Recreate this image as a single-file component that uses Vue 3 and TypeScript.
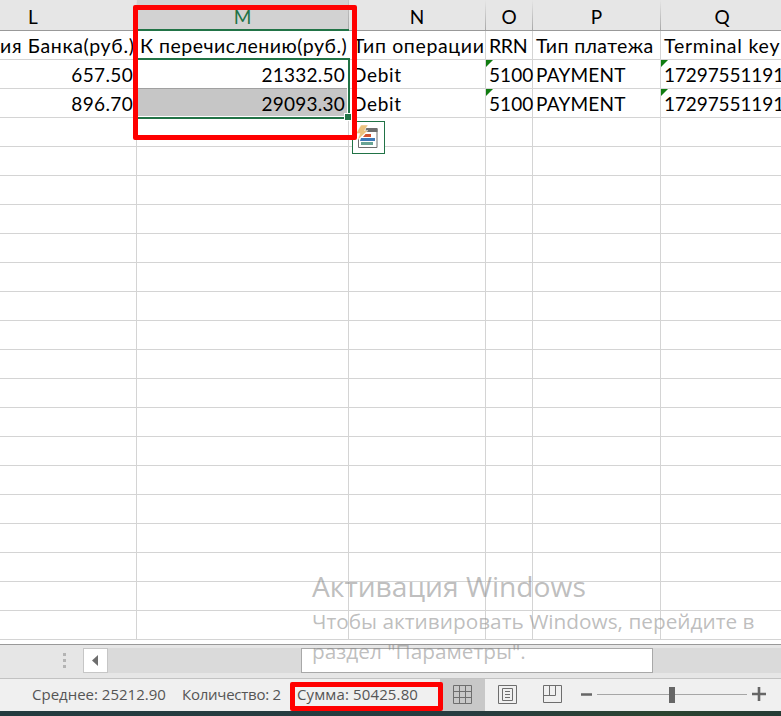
<script setup lang="ts">
interface Column {
  id: string
  width: number
  title: string
  titleSpacing: number
  values: string[]
  spacing: number
  numeric?: boolean
  flagged?: boolean
}

const columns: Column[] = [
  { id: 'L', width: 137, title: 'ия Банка(руб.)', titleSpacing: 0.66, values: ['657.50', '896.70'], spacing: 0.35, numeric: true },
  { id: 'M', width: 212, title: 'К перечислению(руб.)', titleSpacing: 0.5, values: ['21332.50', '29093.30'], spacing: 0.25, numeric: true },
  { id: 'N', width: 137, title: 'Тип операции', titleSpacing: 0.65, values: ['Debit', 'Debit'], spacing: 0.65 },
  { id: 'O', width: 47, title: 'RRN', titleSpacing: -0.4, values: ['5100', '5100'], spacing: 0.1, flagged: true },
  { id: 'P', width: 128, title: 'Тип платежа', titleSpacing: 0.4, values: ['PAYMENT', 'PAYMENT'], spacing: 0.2 },
  { id: 'Q', width: 121, title: 'Terminal key', titleSpacing: 0.78, values: ['17297551191', '17297551191'], spacing: -0.1, flagged: true },
]
const emptyRows = 18
</script>

<template>
  <div class="window">
    <div class="sheet">
      <div v-for="c in columns" :key="c.id" class="column" :class="'col-' + c.id" :style="{ width: c.width + 'px' }">
        <div class="head"><span>{{ c.id }}</span></div>
        <div class="cell title"><span :style="{ letterSpacing: c.titleSpacing + 'px' }">{{ c.title }}</span></div>
        <div v-for="(v, i) in c.values" :key="i" class="cell" :class="{ numeric: c.numeric, flagged: c.flagged, shaded: c.id === 'M' && i === 1, first: i === 0 }">
          <span :style="{ letterSpacing: c.spacing + 'px' }">{{ v }}</span>
        </div>
        <div v-for="n in emptyRows" :key="'e' + n" class="cell"></div>
      </div>
      <div class="selection"><i class="handle"></i></div>
      <svg class="quick" width="33" height="33" viewBox="0 0 33 33">
        <rect x=".5" y=".5" width="32" height="32" fill="#fff" stroke="#217346" />
        <path d="M6.500 18v8.500h18.500V8" fill="none" stroke="#6e6e6e" />
        <path d="M14 7h11.500v4H13z" fill="#6e6e6e" />
        <path d="M13.500 13h5.500v3h-8z" fill="#d35230" />
        <path d="M9 17h14v3H8z" fill="#3e78b8" />
        <path d="M9 21h12v3H9z" fill="#68a394" />
        <path d="M9 4h7l-3.500 5.500H16L5.500 19l2.500-6.500H4z" fill="#ebc27e" stroke="#fff" stroke-width=".4" />
      </svg>
    </div>

    <div class="scroll">
      <div class="grip"><i></i><i></i><i></i></div>
      <div class="arrow"><svg width="23" height="23" viewBox="0 0 23 23"><path d="M8 11.500L14 6v11z" fill="#6e6e6e" /></svg></div>
      <div class="track"><div class="thumb"></div></div>
    </div>

    <div class="status">
      <span class="stat avg">Среднее: 25212.90</span>
      <span class="stat count">Количество: 2</span>
      <span class="stat sum">Сумма: 50425.80</span>
      <div class="view active">
        <svg width="19" height="19" viewBox="0 0 19 19"><path d="M.5.5h18v18H.5zM6.500.5v18M12.500.5v18M.5 6.500h18M.5 12.500h18" /></svg>
      </div>
      <div class="view">
        <svg width="19" height="19" viewBox="0 0 19 19"><path d="M.5.5h18v18H.5zM4.500 3.500h10v12h-10zM7 6.500h5M7 9.500h5M7 12.500h5" /></svg>
      </div>
      <div class="view">
        <svg width="19" height="19" viewBox="0 0 19 19"><path d="M.5.5h18v17H.5zM6.500.5v10M12.500.5v10M.5 10.500h12" /></svg>
      </div>
      <svg class="zoom" width="190" height="20" viewBox="0 0 190 20">
        <path d="M4 9.500h11" stroke="#666" stroke-width="2.500" />
        <path d="M20 9.500h150" stroke="#a6a6a6" />
        <path d="M92 2h6v16h-6z" fill="#666" />
        <path d="M175 9h14M182 2v14" stroke="#666" stroke-width="2.600" />
      </svg>
    </div>
    <div class="desktop"></div>

    <div class="watermark">
      <div class="wm-title">Активация Windows</div>
      <div>Чтобы активировать Windows, перейдите в</div>
      <div>раздел "Параметры".</div>
    </div>
    <div class="mark mark-column"></div>
    <div class="mark mark-sum"></div>
  </div>
</template>

<style>
body { margin: 0; overflow: hidden; }
</style>
<style scoped>
.window { position: relative; display: flex; flex-direction: column; width: 781px; height: 716px; overflow: hidden; background: #fff; }
.sheet { position: relative; display: flex; height: 645px; box-sizing: border-box; overflow: hidden; font: 19px/29px Lato, "Noto Sans", sans-serif; color: #000; border-bottom: 1px solid #999; }
.column { flex: none; }
.head { box-sizing: border-box; height: 31px; border-bottom: 1px solid #999; background: linear-gradient(#e6e6e6, #a8a8a8) right / 1px 100% no-repeat #e6e6e6; text-align: center; line-height: 33px; padding-right: 1px; }
.col-L .head { padding-right: 71px; }
.col-Q .head { padding-left: 2px; background: #e6e6e6; }
.col-M .head { background: linear-gradient(#c6c6c6, #a8a8a8) right / 1px 100% no-repeat #d2d2d2; border-bottom: 2px solid #217346; color: #217346; }
.cell { box-sizing: border-box; height: 29px; border-right: 1px solid #d4d4d4; border-bottom: 1px solid #d4d4d4; padding: 0 3px 0 3px; white-space: nowrap; position: relative; line-height: 29px; }
.title { font-size: 19.5px; }
.col-L .title { padding-left: 0; }
.col-M .title { padding-right: 0; border-right-color: transparent; }
.col-N .title { padding-left: 4px; }
.col-O .cell, .col-P .cell { padding-right: 0; }
.col-Q .cell { border-right: 0; padding-right: 0; }
.numeric { text-align: right; }
.flagged::before { content: ""; position: absolute; left: 0; top: 0; border-top: 7px solid #107c10; border-right: 7px solid transparent; }
.shaded { background: #c6c6c6; }
.col-M .first { border-bottom-color: #a0a0a0; }
.selection { position: absolute; left: 135px; top: 58px; width: 215px; height: 61px; box-sizing: border-box; border: 2px solid #217346; box-shadow: inset -1px -1px #fff; }
.handle { position: absolute; right: -3px; bottom: -3px; width: 6px; height: 6px; background: #217346; outline: 1px solid #fff; }
.quick { position: absolute; left: 352px; top: 121px; }
.scroll { display: flex; height: 34px; box-sizing: border-box; padding-top: 3px; background: #e6e6e6; border-bottom: 1px solid #c2c2c2; }
.grip { display: flex; flex-direction: column; gap: 3px; width: 20px; padding: 5px 0 0 63px; }
.grip i { width: 3px; height: 3px; background: #b4b4b4; }
.arrow { width: 23px; height: 23px; border: 1px solid #c6c6c6; background: #fff; }
.track { flex: 1; height: 25px; padding-left: 193px; background: #dadada; }
.thumb { box-sizing: border-box; width: 352px; height: 25px; border: 1px solid #a8a8a8; background: #fff; }
.status { display: flex; height: 32px; background: #f0f0f0; font: 15px/31px "Open Sans", "Noto Sans", sans-serif; color: #555; }
.stat { flex: none; white-space: nowrap; }
.avg { width: 150px; padding-left: 32px; }
.count { width: 114px; letter-spacing: -.25px; }
.sum { width: 143px; padding-left: 1px; letter-spacing: .13px; }
.view { flex: none; width: 45px; display: flex; align-items: flex-start; justify-content: center; padding-top: 6px; box-sizing: border-box; }
.view svg { fill: none; stroke: #6e6e6e; }
.active { background: #c8c8c8; }
.zoom { flex: none; margin: 6px 0 0 2px; }
.desktop { flex: 1; background: linear-gradient(90deg, #243b3f, #283c40 60%, #2c4430 85%, #253b35); }
.watermark { position: absolute; left: 312px; top: 567px; font: 20.8px/30px "Open Sans", "Noto Sans", sans-serif; white-space: nowrap; color: rgba(135, 135, 135, .55); }
.wm-title { font-size: 28.2px; line-height: 39px; }
.mark { position: absolute; box-sizing: border-box; border: 5px solid #f00; border-radius: 2px; }
.mark-column { left: 133px; top: 5px; width: 224px; height: 135px; }
.mark-sum { left: 290px; top: 682px; width: 153px; height: 29px; }
</style>
